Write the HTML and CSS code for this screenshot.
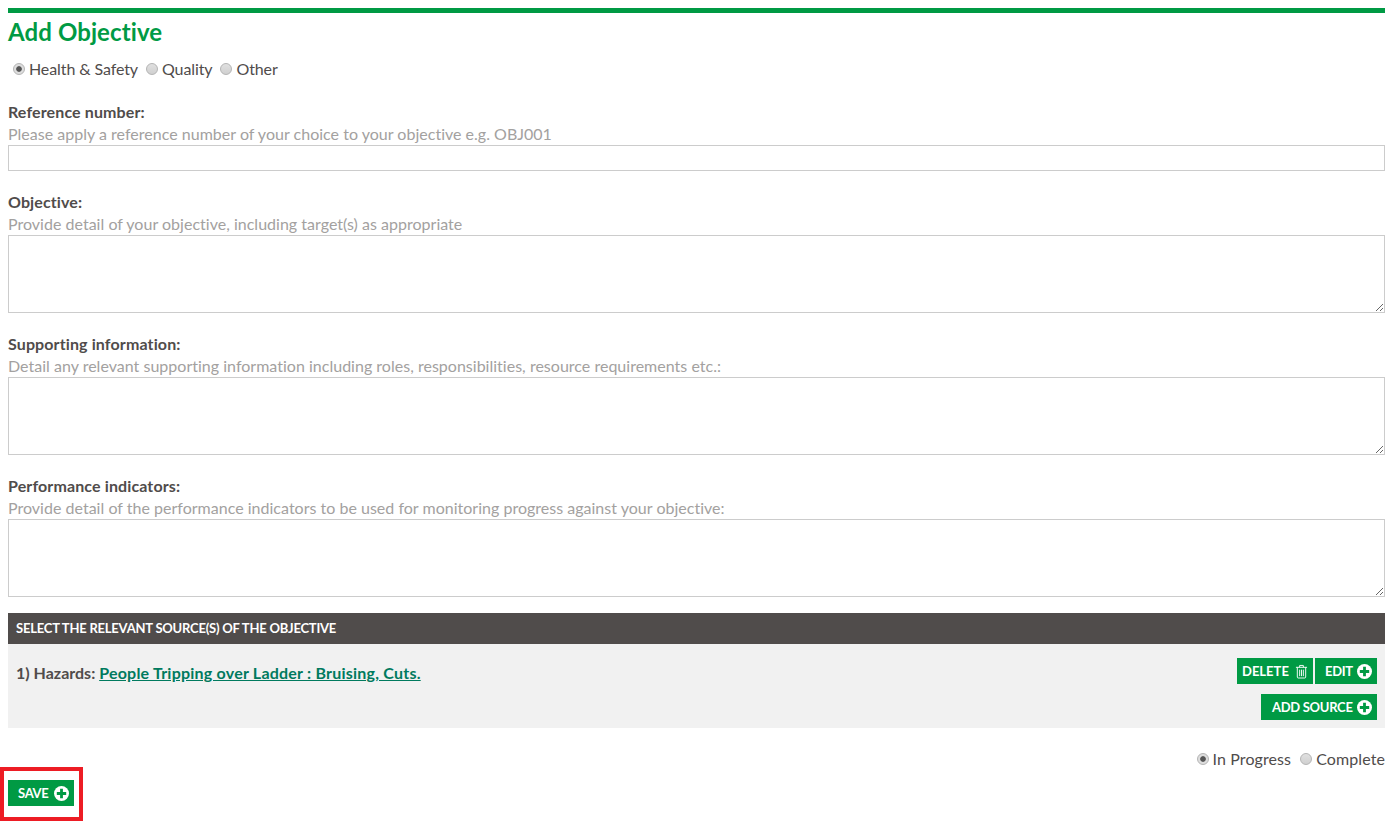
FILE: index.html
```html
<!DOCTYPE html>
<html lang="en">
<head>
<meta charset="utf-8">
<title>Add Objective</title>
<link rel="stylesheet" href="styles.css">
</head>
<body>
<main class="page">
  <h1 class="title">Add Objective</h1>
  <div class="radios type-radios">
    <label class="radio"><input type="radio" name="type" checked><span>Health &amp; Safety</span></label>
    <label class="radio"><input type="radio" name="type"><span>Quality</span></label>
    <label class="radio"><input type="radio" name="type"><span>Other</span></label>
  </div>
  <div class="field">
    <label class="label">Reference number:</label>
    <p class="hint">Please apply a reference number of your choice to your objective e.g. OBJ001</p>
    <input class="control input" type="text">
  </div>
  <div class="field">
    <label class="label">Objective:</label>
    <p class="hint">Provide detail of your objective, including target(s) as appropriate</p>
    <textarea class="control area"></textarea>
  </div>
  <div class="field">
    <label class="label">Supporting information:</label>
    <p class="hint">Detail any relevant supporting information including roles, responsibilities, resource requirements etc.:</p>
    <textarea class="control area"></textarea>
  </div>
  <div class="field field-last">
    <label class="label">Performance indicators:</label>
    <p class="hint">Provide detail of the performance indicators to be used for monitoring progress against your objective:</p>
    <textarea class="control area"></textarea>
  </div>
  <section class="sources">
    <h2 class="sources-head">SELECT THE RELEVANT SOURCE(S) OF THE OBJECTIVE</h2>
    <div class="sources-body">
      <div class="source-row">
        <p class="source-text">1) Hazards: <a href="#">People Tripping over Ladder : Bruising, Cuts.</a></p>
        <div class="actions">
          <button class="btn btn-delete" type="button">DELETE
            <svg class="trash" viewBox="0 0 14 16" width="13" height="15" fill="none" stroke="#fff" stroke-width="1"><path d="M1 3.5h12M5 3.5V1.5h4v2M2.5 3.5v10.5a1 1 0 0 0 1 1h7a1 1 0 0 0 1-1V3.5M5 6v7M7 6v7M9 6v7"/></svg>
          </button>
          <button class="btn btn-edit" type="button">EDIT
            <svg class="plus" viewBox="0 0 16 16" width="15" height="15"><circle cx="8" cy="8" r="8" fill="#fff"/><path d="M8 3v10M3 8h10" stroke="#009a44" stroke-width="3"/></svg>
          </button>
        </div>
      </div>
      <div class="add-row">
        <button class="btn btn-add" type="button">ADD SOURCE
          <svg class="plus" viewBox="0 0 16 16" width="15" height="15"><circle cx="8" cy="8" r="8" fill="#fff"/><path d="M8 3v10M3 8h10" stroke="#009a44" stroke-width="3"/></svg>
        </button>
      </div>
    </div>
  </section>
  <div class="radios status-radios">
    <label class="radio"><input type="radio" name="status" checked><span>In Progress</span></label>
    <label class="radio"><input type="radio" name="status"><span>Complete</span></label>
  </div>
  <div class="save-row">
    <button class="btn btn-save" type="button">SAVE
      <svg class="plus" viewBox="0 0 16 16" width="15" height="15"><circle cx="8" cy="8" r="8" fill="#fff"/><path d="M8 3v10M3 8h10" stroke="#009a44" stroke-width="3"/></svg>
    </button>
    <span class="highlight"></span>
  </div>
</main>
</body>
</html>
```
FILE: styles.css
```css
* { box-sizing: border-box; }
html, body { margin: 0; background: #fff; }
body {
  min-height: 823px;
  padding: 8px 14px 0 8px;
  font-family: Lato, "Liberation Sans", sans-serif;
  font-variant-ligatures: none;
  color: #504c4b;
  font-size: 16px;
}
.page { border-top: 5px solid #009a44; }
.title {
  margin: 0;
  padding-top: 4px;
  font-size: 24px;
  line-height: 29px;
  font-weight: 700;
  color: #009a44;
  letter-spacing: 0.1px;
}
.radios { display: flex; align-items: center; height: 20px; }
.type-radios { margin-top: 12px; padding-left: 5px; gap: 8px; letter-spacing: -0.1px; }
.status-radios { margin-top: 20px; justify-content: flex-end; gap: 9px; letter-spacing: 0.1px; }
.radio { display: flex; align-items: center; gap: 4px; }
.radio input {
  appearance: none;
  margin: 0;
  width: 12px;
  height: 12px;
  border-radius: 50%;
  border: 1px solid #b4b4b4;
  background: linear-gradient(#e0e0e0, #d0d0d0);
  position: relative;
  top: 1px;
}
.radio input:checked { background: radial-gradient(circle, #555 0 2.4px, #ddd 3.2px); }
.field { margin-bottom: 20px; }
.field-last { margin-bottom: 16px; }
.type-radios + .field { margin-top: 23px; }
.label { display: block; font-weight: 700; line-height: 22px; height: 22px; letter-spacing: 0.12px; }
.hint { margin: 0; color: #a3a1a0; line-height: 22px; height: 22px; letter-spacing: 0.015px; }
.control {
  display: block;
  width: 100%;
  margin: 0;
  border: 1px solid #ccc;
  background: #fff;
  border-radius: 0;
  outline: none;
  font: inherit;
}
.input { height: 26px; }
.area { height: 78px; resize: vertical; }
.sources-head {
  margin: 0;
  height: 31px;
  padding-left: 8px;
  background: #504c4b;
  color: #fff;
  font-size: 13px;
  font-weight: 700;
  line-height: 31px;
  letter-spacing: -0.22px;
}
.sources-body { background: #f1f1f1; height: 84px; padding: 14px 8px 0; }
.source-row { display: flex; justify-content: space-between; }
.source-text { margin: 0; font-weight: 700; line-height: 30px; }
.source-text a { color: #007a5e; letter-spacing: 0.22px; }
.actions { display: flex; gap: 2px; }
.add-row { display: flex; justify-content: flex-end; margin-top: 6px; }
.btn {
  display: flex;
  align-items: center;
  justify-content: space-between;
  height: 26px;
  padding: 0 5px 0 10px;
  border: 0;
  background: #009a44;
  color: #fff;
  font: 700 13px Lato, "Liberation Sans", sans-serif;
  letter-spacing: -0.3px;
}
.btn-delete { width: 76px; padding: 0 5px; letter-spacing: 0; }
.btn-edit { width: 62px; }
.btn-add { width: 116px; padding-left: 11px; }
.save-row { position: relative; margin-top: 12px; }
.btn-save { width: 66px; }
.highlight {
  position: absolute;
  left: -8px;
  top: -13px;
  width: 83px;
  height: 54px;
  border: 4px solid #ed1c24;
  pointer-events: none;
}
```
